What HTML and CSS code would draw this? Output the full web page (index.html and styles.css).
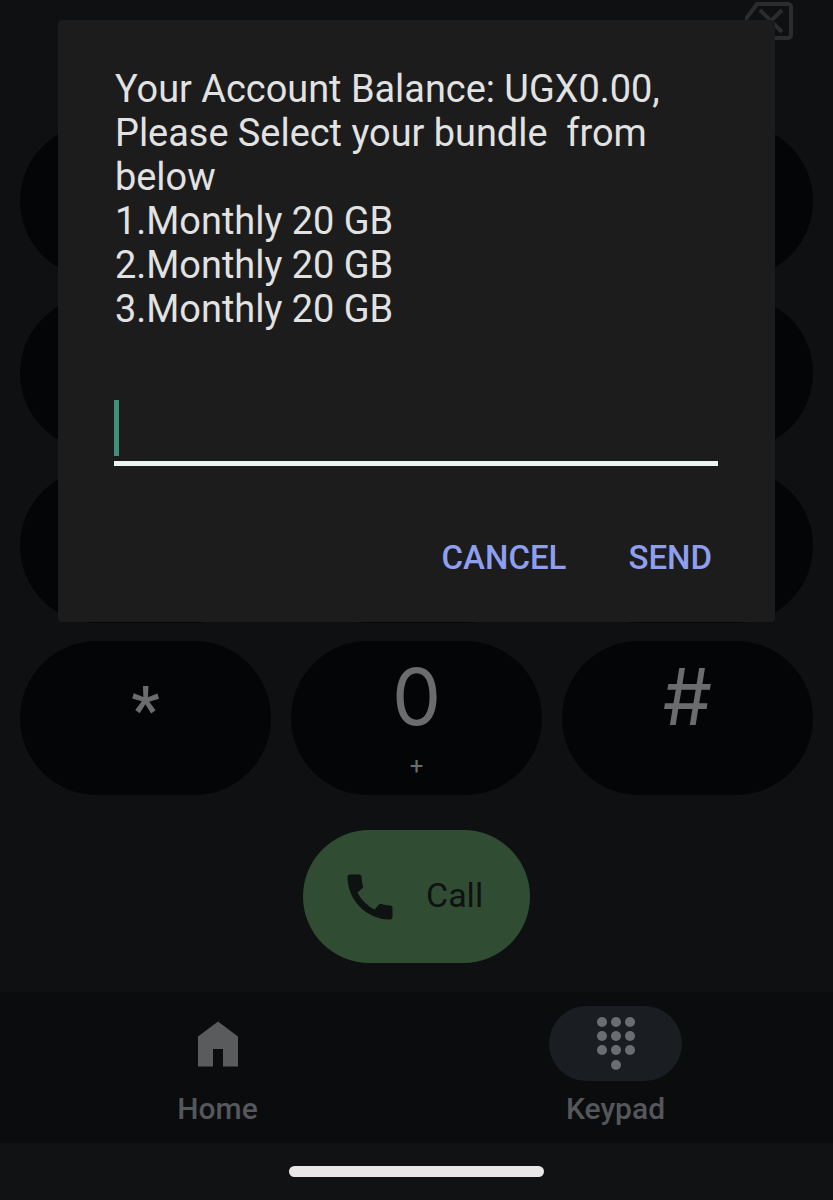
FILE: index.html
```html
<!DOCTYPE html>
<html lang="en">
<head>
    <meta charset="UTF-8">
    <meta name="viewport" content="width=device-width, initial-scale=1.0">
    <title>Phone</title>
    <link rel="stylesheet" href="styles.css">
</head>
<body>
    <div class="dialer">
        <div class="display">
            <svg class="backspace" viewBox="0 0 48 38" width="48" height="38" fill="none">
                <path d="M0 18 L12 2 H43 a3 3 0 0 1 3 3 V33 a3 3 0 0 1 -3 3 H15"/>
                <path d="M15 8 L37 30 M37 8 L26 19"/>
            </svg>
        </div>

        <div class="keypad">
            <div class="key"></div>
            <div class="key"></div>
            <div class="key"></div>
            <div class="key"></div>
            <div class="key"></div>
            <div class="key"></div>
            <div class="key"></div>
            <div class="key"></div>
            <div class="key"></div>
            <div class="key"><span class="digit star">*</span></div>
            <div class="key"><span class="digit">0</span><span class="letters">+</span></div>
            <div class="key"><span class="digit">#</span></div>
        </div>

        <div class="call-row">
            <button class="call-btn">
                <svg viewBox="0 0 24 24" width="60" height="60">
                    <path d="M20.01 15.38c-1.23 0-2.42-.2-3.53-.56-.35-.12-.74-.03-1.01.24l-1.57 1.97c-2.83-1.35-5.48-3.9-6.89-6.83l1.95-1.66c.27-.28.35-.67.24-1.02-.37-1.11-.56-2.3-.56-3.53 0-.54-.45-.99-.99-.99H4.19C3.65 3 3 3.24 3 3.99 3 13.28 10.73 21 20.01 21c.71 0 .99-.63.99-1.18v-3.45c0-.54-.45-.99-.99-.99z"/>
                </svg>
                <span class="call-label">Call</span>
            </button>
        </div>

        <div class="nav">
            <div class="nav-item">
                <div class="nav-icon">
                    <svg viewBox="0 0 24 24" width="60" height="60">
                        <path d="M4 21V9l8-6 8 6v12h-6v-7h-4v7H4z"/>
                    </svg>
                </div>
                <div class="nav-label">Home</div>
            </div>
            <div class="nav-item">
                <div class="nav-icon active">
                    <svg viewBox="0 0 38 56" width="38" height="56">
                        <circle cx="5" cy="6" r="5"/><circle cx="19" cy="6" r="5"/><circle cx="33" cy="6" r="5"/>
                        <circle cx="5" cy="20" r="5"/><circle cx="19" cy="20" r="5"/><circle cx="33" cy="20" r="5"/>
                        <circle cx="5" cy="34" r="5"/><circle cx="19" cy="34" r="5"/><circle cx="33" cy="34" r="5"/>
                        <circle cx="19" cy="49" r="5"/>
                    </svg>
                </div>
                <div class="nav-label">Keypad</div>
            </div>
        </div>

        <div class="home-bar"><div class="home-handle"></div></div>
    </div>

    <div class="dialog">
        <p class="message">Your Account Balance: UGX0.00,<br>Please Select your bundle&nbsp; from below<br>1.Monthly 20 GB<br>2.Monthly 20 GB<br>3.Monthly 20 GB</p>
        <div class="field"><div class="cursor"></div></div>
        <div class="actions">
            <span class="action">CANCEL</span>
            <span class="action">SEND</span>
        </div>
    </div>
</body>
</html>
```

FILE: styles.css
```css
* {
    box-sizing: border-box;
    margin: 0;
    padding: 0;
}

body {
    font-family: Roboto, "Noto Sans", sans-serif;
    background: #0e1012;
    position: relative;
    height: 1200px;
    overflow: hidden;
}

.dialer {
    display: flex;
    flex-direction: column;
    height: 1200px;
}

.display {
    height: 123.5px;
    display: flex;
    justify-content: flex-end;
    padding: 2px 40px 0 0;
}

.backspace {
    stroke: #2b2c2e;
    stroke-width: 4;
}

.keypad {
    display: grid;
    grid-template-columns: repeat(3, 1fr);
    grid-auto-rows: 154px;
    column-gap: 20px;
    row-gap: 18.5px;
    padding: 0 20px;
}

.key {
    background: #040506;
    border-radius: 77px;
    display: flex;
    flex-direction: column;
    align-items: center;
    color: #6b6c6e;
    padding-top: 12px;
}

.digit {
    font-family: Inter, Roboto, sans-serif;
    font-size: 78px;
    font-weight: 400;
    line-height: 88px;
    height: 100px;
}

.star {
    font-family: Roboto, sans-serif;
    font-size: 64px;
    font-weight: 500;
    margin-top: 14px;
}

.letters {
    font-size: 24px;
    line-height: 26px;
}

.call-row {
    display: flex;
    justify-content: center;
    margin-top: 35px;
}

.call-btn {
    width: 227px;
    height: 133px;
    border: none;
    border-radius: 67px;
    background: #304d33;
    color: #0e1210;
    display: flex;
    align-items: center;
    gap: 26px;
    padding-left: 37px;
    font-family: inherit;
    font-size: 34px;
}

.call-btn svg {
    fill: #0e1210;
}

.call-label {
    margin-bottom: 4px;
}

.nav {
    margin-top: 29px;
    height: 151px;
    background: #0a0c0e;
    display: flex;
    justify-content: space-between;
    padding: 14px 151px 0;
}

.nav-item {
    width: 133px;
    display: flex;
    flex-direction: column;
    align-items: center;
}

.nav-icon {
    width: 133px;
    height: 75px;
    border-radius: 38px;
    display: flex;
    align-items: center;
    justify-content: center;
    fill: #5a5b5d;
}

.nav-icon.active {
    background: #1a1d21;
    fill: #6b6d70;
}

.nav-label {
    margin-top: 10px;
    font-size: 30px;
    line-height: 36px;
    font-weight: 500;
    color: #55575a;
    white-space: nowrap;
}

.home-bar {
    flex: 1;
    background: #101214;
    display: flex;
    justify-content: center;
    padding-top: 23px;
}

.home-handle {
    width: 255px;
    height: 11px;
    border-radius: 6px;
    background: #e8e8e8;
}

.dialog {
    position: absolute;
    left: 58px;
    top: 20px;
    width: 717px;
    height: 602px;
    background: #1c1c1c;
    border-radius: 4px;
    padding: 47px 57px 0;
}

.message {
    color: #e2e2e2;
    font-size: 37.9px;
    line-height: 44px;
}

.field {
    margin-top: 69px;
    margin-left: -1px;
    height: 66px;
    border-bottom: 5px solid #eaf6f2;
}

.cursor {
    width: 5px;
    height: 56px;
    background: #3f8f7c;
}

.actions {
    display: flex;
    justify-content: flex-end;
    gap: 62px;
    padding-right: 6px;
    margin-top: 73px;
}

.action {
    color: #8f9fef;
    font-size: 33px;
    line-height: 38px;
    font-weight: 500;
}
```
